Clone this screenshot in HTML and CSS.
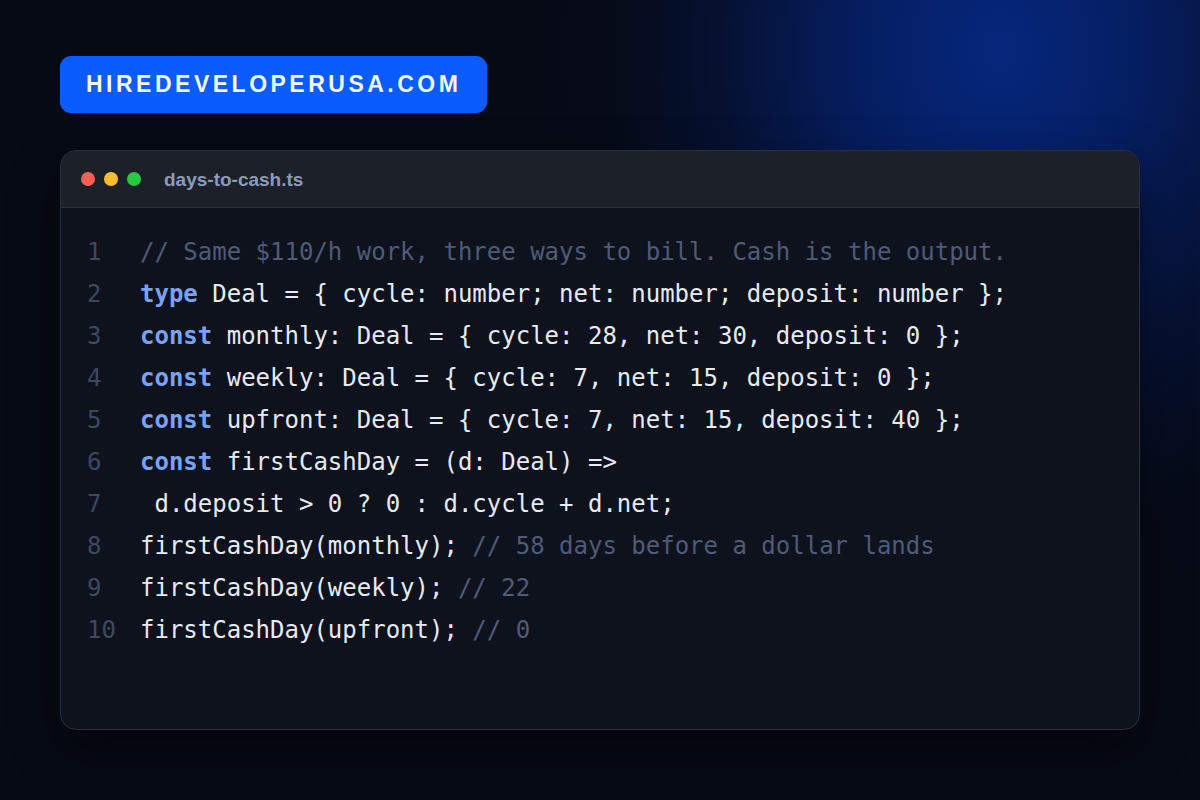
FILE: index.html
```html
<!DOCTYPE html>
<html lang="en">
<head>
<meta charset="utf-8">
<title>days-to-cash.ts</title>
<link rel="stylesheet" href="styles.css">
</head>
<body>
<div class="page">
  <div class="badge">HIREDEVELOPERUSA.COM</div>
  <div class="window">
    <div class="titlebar">
      <span class="dot red"></span>
      <span class="dot yellow"></span>
      <span class="dot green"></span>
      <span class="filename">days-to-cash.ts</span>
    </div>
    <div class="code">
      <div class="line"><span class="num">1</span><span class="src"><span class="cm">// Same $110/h work, three ways to bill. Cash is the output.</span></span></div>
      <div class="line"><span class="num">2</span><span class="src"><span class="kw">type</span> Deal = { cycle: number; net: number; deposit: number };</span></div>
      <div class="line"><span class="num">3</span><span class="src"><span class="kw">const</span> monthly: Deal = { cycle: 28, net: 30, deposit: 0 };</span></div>
      <div class="line"><span class="num">4</span><span class="src"><span class="kw">const</span> weekly: Deal = { cycle: 7, net: 15, deposit: 0 };</span></div>
      <div class="line"><span class="num">5</span><span class="src"><span class="kw">const</span> upfront: Deal = { cycle: 7, net: 15, deposit: 40 };</span></div>
      <div class="line"><span class="num">6</span><span class="src"><span class="kw">const</span> firstCashDay = (d: Deal) =&gt;</span></div>
      <div class="line"><span class="num">7</span><span class="src"> d.deposit &gt; 0 ? 0 : d.cycle + d.net;</span></div>
      <div class="line"><span class="num">8</span><span class="src">firstCashDay(monthly); <span class="cm">// 58 days before a dollar lands</span></span></div>
      <div class="line"><span class="num">9</span><span class="src">firstCashDay(weekly); <span class="cm">// 22</span></span></div>
      <div class="line"><span class="num">10</span><span class="src">firstCashDay(upfront); <span class="cm">// 0</span></span></div>
    </div>
  </div>
</div>
</body>
</html>
```
FILE: styles.css
```css
* { box-sizing: border-box; }
html, body {
  margin: 0;
  padding: 0;
  width: 1200px;
  height: 800px;
  overflow: hidden;
}
body {
  background:
    radial-gradient(ellipse 480px 600px at 1000px 50px, rgba(6, 40, 130, 0.95) 0%, rgba(5, 34, 112, 0.82) 30%, rgba(6, 24, 78, 0.5) 58%, rgba(7, 14, 38, 0.15) 82%, rgba(7, 11, 22, 0) 100%),
    #060a15;
  font-family: "Liberation Sans", Arial, sans-serif;
}
.page {
  padding: 56px 60px;
  display: flex;
  flex-direction: column;
  align-items: flex-start;
}
.badge {
  height: 57px;
  padding: 0 26px;
  display: flex;
  align-items: center;
  background: #0a5cff;
  border-radius: 11px;
  color: #f4f7ff;
  font-weight: 700;
  font-size: 23px;
  letter-spacing: 3.5px;
}
.window {
  margin-top: 37px;
  width: 1080px;
  height: 580px;
  border-radius: 16px;
  border: 1px solid #2a2f3b;
  background: #0e121c;
  overflow: hidden;
  box-shadow: 0 20px 50px rgba(0, 0, 0, 0.45);
}
.titlebar {
  height: 57px;
  background: #1c2029;
  border-bottom: 1px solid #2c313d;
  display: flex;
  align-items: center;
  padding-left: 20px;
}
.dot {
  width: 14px;
  height: 14px;
  border-radius: 50%;
  margin-right: 9px;
}
.red { background: #ff5f57; }
.yellow { background: #febc2e; }
.green { background: #28c840; }
.filename {
  margin-left: 14px;
  margin-top: 2px;
  color: #8d9aba;
  font-weight: 700;
  font-size: 19px;
}
.code {
  padding: 23px 0 0 26px;
  font-family: "DejaVu Sans Mono", monospace;
  font-size: 24px;
  line-height: 42px;
  color: #e6ebf5;
}
.line {
  display: flex;
  white-space: pre;
}
.num {
  width: 53px;
  color: #3e485f;
}
.kw { color: #7aa2f7; font-weight: 700; }
.cm { color: #4f5b78; }
```
